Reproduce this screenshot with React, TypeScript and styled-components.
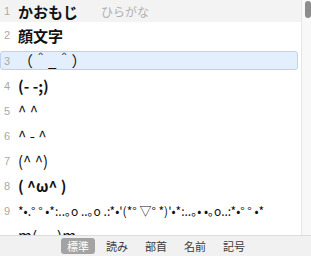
import styled, { createGlobalStyle } from "styled-components";

const GlobalStyle = createGlobalStyle`
  html, body {
    margin: 0;
    padding: 0;
    background: #ffffff;
  }
  body {
    font-family: "Noto Sans CJK JP", "Noto Sans", sans-serif;
  }
`;

const Window = styled.div`
  width: 311px;
  height: 256px;
  display: flex;
  flex-direction: column;
  overflow: hidden;
  background: #ffffff;
`;

const Body = styled.div`
  flex: 1;
  display: flex;
  min-height: 0;
`;

const List = styled.div`
  width: 301px;
  display: flex;
  flex-direction: column;
  overflow: hidden;
`;

const ScrollTrack = styled.div`
  width: 9px;
  border-left: 1px solid #e6e6e6;
  background: #f8f8f8;
  display: flex;
  justify-content: flex-end;
`;

const ScrollThumb = styled.div`
  width: 6px;
  height: 17px;
  margin-top: 1px;
  border-radius: 3px;
  background: #8c8c8c;
`;

const Row = styled.div<{ $h: number; $header?: boolean }>`
  flex: none;
  height: ${(p) => p.$h}px;
  display: flex;
  align-items: center;
  background: ${(p) => (p.$header ? "#f3f3f3" : "transparent")};
  box-sizing: border-box;
  position: relative;
  overflow: hidden;
`;

const Highlight = styled.div`
  position: absolute;
  left: 0;
  right: 3px;
  top: 3px;
  bottom: 3px;
  background: #e4effd;
  border: 1px solid #b9d3f1;
  border-radius: 3px;
`;

const Num = styled.span`
  position: relative;
  flex: none;
  width: 18px;
  padding-left: 4px;
  box-sizing: border-box;
  font-family: "Liberation Sans", "Noto Sans", sans-serif;
  font-size: 11px;
  color: #a9a9a9;
`;

const Entry = styled.span<{ $bold?: boolean; $size?: number }>`
  position: relative;
  font-size: ${(p) => p.$size ?? 15}px;
  font-weight: ${(p) => (p.$bold ? 700 : 400)};
  color: #111111;
  white-space: nowrap;
`;

const Reading = styled.span`
  position: relative;
  margin-left: 23px;
  font-size: 12px;
  color: #b0b0b0;
`;

const TabBar = styled.div`
  flex: none;
  height: 20px;
  border-top: 1px solid #dcdcdc;
  background: #f1f1f1;
  display: flex;
  justify-content: center;
  align-items: center;
  gap: 5px;
  padding-left: 1px;
`;

const Tab = styled.div<{ $active?: boolean }>`
  width: 34px;
  height: 16px;
  border-radius: 3px;
  display: flex;
  align-items: center;
  justify-content: center;
  font-size: 11px;
  color: ${(p) => (p.$active ? "#ffffff" : "#3c3c3c")};
  background: ${(p) => (p.$active ? "#a3a3a3" : "transparent")};
`;

type Item = {
  n: number;
  text: string;
  h: number;
  bold?: boolean;
  header?: boolean;
  selected?: boolean;
  reading?: string;
  size?: number;
};

const rows: Item[] = [
  { n: 1, text: "かおもじ", bold: true, h: 22, header: true, reading: "ひらがな" },
  { n: 2, text: "顔文字", bold: true, h: 26 },
  { n: 3, text: "（＾_＾）", h: 25, selected: true },
  { n: 4, text: "(- -;)", bold: true, h: 25 },
  { n: 5, text: "^ ^", h: 25 },
  { n: 6, text: "^ - ^", h: 25 },
  { n: 7, text: "(^ ^)", h: 25 },
  { n: 8, text: "( ^ω^ )", bold: true, h: 25 },
  {
    n: 9,
    text: "*•.° ° •*:..｡o ..｡o .:*•'(*° ▽° *)'•*:..｡• •｡o..:*•° ° •*",
    h: 25,
    size: 12,
  },
  { n: 10, text: "m(_ _)m", h: 25 },
];

const tabs = ["標準", "読み", "部首", "名前", "記号"];

export default function App() {
  return (
    <>
      <GlobalStyle />
      <Window>
        <Body>
          <List>
            {rows.map((r) => (
              <Row key={r.n} $h={r.h} $header={r.header}>
                {r.selected && <Highlight />}
                <Num>{r.n < 10 ? r.n : ""}</Num>
                <Entry $bold={r.bold} $size={r.size}>
                  {r.text}
                </Entry>
                {r.reading && <Reading>{r.reading}</Reading>}
              </Row>
            ))}
          </List>
          <ScrollTrack>
            <ScrollThumb />
          </ScrollTrack>
        </Body>
        <TabBar>
          {tabs.map((t, i) => (
            <Tab key={t} $active={i === 0}>
              {t}
            </Tab>
          ))}
        </TabBar>
      </Window>
    </>
  );
}
